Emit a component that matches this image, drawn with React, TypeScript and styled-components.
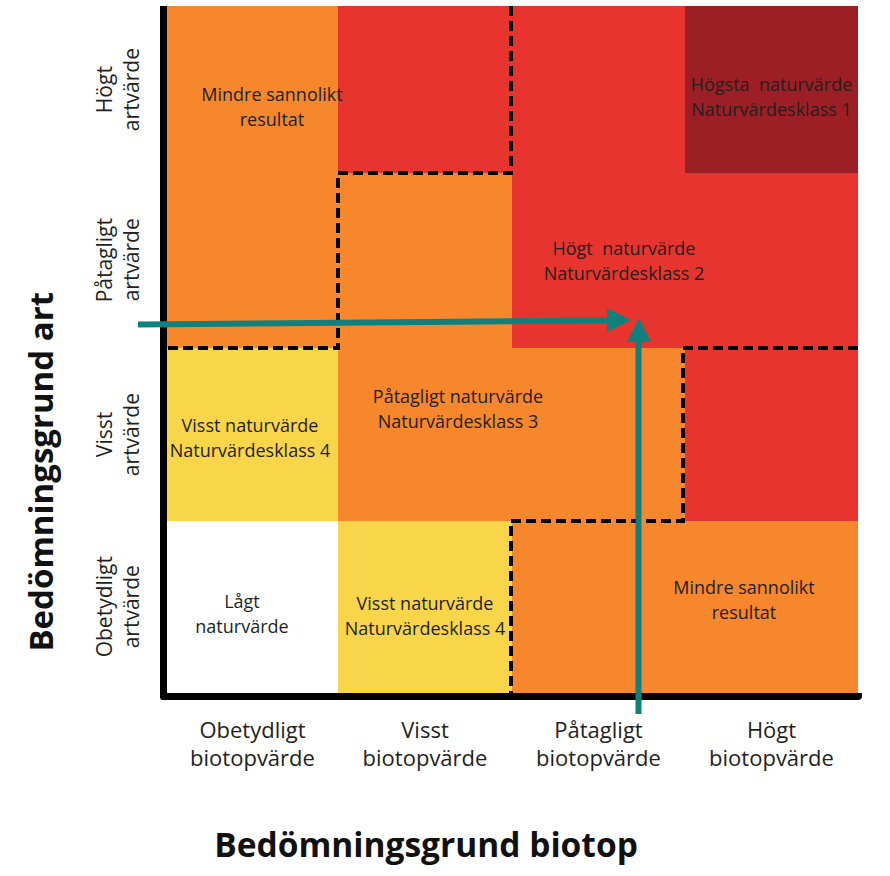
import React from "react";
import styled, { createGlobalStyle } from "styled-components";

const GlobalStyle = createGlobalStyle`
  html, body { margin: 0; padding: 0; background: #ffffff; }
  body {
    font-family: "Open Sans", "Liberation Sans", sans-serif;
    color: #231f20;
  }
`;

type Tone = "orange" | "red" | "dark" | "yellow" | "white";

const toneColor: Record<Tone, string> = {
  orange: "#f6872d",
  red: "#e8342e",
  dark: "#9c1f25",
  yellow: "#f9d54a",
  white: "#ffffff",
};

const COLS = "171px 174px 173px 173px";
const ROWS = "167px 175px 173px 172px";

const Page = styled.div`
  position: relative;
  width: 890px;
  height: 876px;
  display: grid;
  grid-template-columns: 80px 80px 702px 28px;
  grid-template-rows: 6px 694px 84px 92px;
  overflow: hidden;
`;

const SideTitle = styled.div`
  grid-column: 1;
  grid-row: 2;
  display: flex;
  align-items: center;
  justify-content: center;
  padding-top: 238px;
`;

const SideTitleText = styled.h2`
  margin: 0;
  writing-mode: vertical-rl;
  transform: rotate(180deg);
  font-size: 33px;
  font-weight: 700;
  line-height: 1;
  white-space: nowrap;
  color: #111;
`;

const RowLabels = styled.div`
  grid-column: 2;
  grid-row: 2;
  display: grid;
  grid-template-rows: ${ROWS};
  padding-bottom: 7px;
`;

const RowLabelCell = styled.div`
  display: flex;
  align-items: center;
  justify-content: center;
  padding-right: 5px;
`;

const RowLabelText = styled.span`
  writing-mode: vertical-rl;
  transform: rotate(180deg);
  text-align: center;
  font-size: 21px;
  line-height: 27px;
  white-space: nowrap;
`;

const Plot = styled.div`
  grid-column: 3;
  grid-row: 2;
  display: grid;
  grid-template-columns: ${COLS};
  grid-template-rows: ${ROWS};
  border-left: 7px solid #000;
  border-bottom: 7px solid #000;
  border-bottom-left-radius: 3px;
  border-bottom-right-radius: 4px;
  padding-right: 4px;
`;

const Cell = styled.div<{ $tone: Tone; $r: number; $c: number }>`
  grid-row: ${(p) => p.$r};
  grid-column: ${(p) => p.$c};
  background: ${(p) => toneColor[p.$tone]};
`;

const CellLabel = styled.div<{ $row: string; $col: string; $pad: string }>`
  grid-row: ${(p) => p.$row};
  grid-column: ${(p) => p.$col};
  display: flex;
  align-items: center;
  justify-content: center;
  padding: ${(p) => p.$pad};
  text-align: center;
  font-size: 18px;
  line-height: 25px;
  white-space: nowrap;
  z-index: 1;
`;

const XAxisLabels = styled.div`
  grid-column: 3;
  grid-row: 3;
  display: grid;
  grid-template-columns: ${COLS};
  align-items: start;
  padding-left: 7px;
  padding-top: 15px;
`;

const XAxisLabel = styled.div`
  text-align: center;
  font-size: 22px;
  line-height: 28px;
  white-space: nowrap;
`;

const BottomTitle = styled.h2`
  grid-column: 1 / -1;
  grid-row: 4;
  margin: 0;
  padding-top: 40px;
  padding-right: 38px;
  text-align: center;
  font-size: 33.5px;
  font-weight: 700;
  line-height: 40px;
  color: #111;
`;

const Overlay = styled.svg`
  position: absolute;
  left: 0;
  top: 0;
  width: 890px;
  height: 876px;
  pointer-events: none;
  z-index: 2;
`;

const cells: Tone[][] = [
  ["orange", "red", "red", "dark"],
  ["orange", "orange", "red", "red"],
  ["yellow", "orange", "orange", "red"],
  ["white", "yellow", "orange", "orange"],
];

const labels: { row: string; col: string; pad: string; lines: string[] }[] = [
  { row: "1", col: "1 / 3", pad: "34px 135px 0 0", lines: ["Mindre sannolikt", "resultat"] },
  { row: "1", col: "4", pad: "14px 0 0 0", lines: ["Högsta\u00a0 naturvärde", "Naturvärdesklass 1"] },
  { row: "2", col: "3 / 5", pad: "0 122px 0 0", lines: ["Högt\u00a0 naturvärde", "Naturvärdesklass 2"] },
  { row: "3", col: "2 / 4", pad: "0 107px 51px 0", lines: ["Påtagligt naturvärde", "Naturvärdesklass 3"] },
  { row: "3", col: "1", pad: "7px 5px 0 0", lines: ["Visst naturvärde", "Naturvärdesklass 4"] },
  { row: "4", col: "1", pad: "13px 21px 0 0", lines: ["Lågt", "naturvärde"] },
  { row: "4", col: "2", pad: "18px 0 0 0", lines: ["Visst naturvärde", "Naturvärdesklass 4"] },
  { row: "4", col: "3 / 5", pad: "0 0 14px 118px", lines: ["Mindre sannolikt", "resultat"] },
];

const rowLabels = [
  ["Högt", "artvärde"],
  ["Påtagligt", "artvärde"],
  ["Visst", "artvärde"],
  ["Obetydligt", "artvärde"],
];

const colLabels = [
  ["Obetydligt", "biotopvärde"],
  ["Visst", "biotopvärde"],
  ["Påtagligt", "biotopvärde"],
  ["Högt", "biotopvärde"],
];

const TEAL = "#10807c";

export default function App() {
  return (
    <>
      <GlobalStyle />
      <Page>
        <SideTitle>
          <SideTitleText>Bedömningsgrund art</SideTitleText>
        </SideTitle>

        <RowLabels>
          {rowLabels.map((l, i) => (
            <RowLabelCell key={i}>
              <RowLabelText>
                {l[0]}
                <br />
                {l[1]}
              </RowLabelText>
            </RowLabelCell>
          ))}
        </RowLabels>

        <Plot>
          {cells.flatMap((row, r) =>
            row.map((tone, c) => (
              <Cell key={`${r}-${c}`} $tone={tone} $r={r + 1} $c={c + 1} />
            ))
          )}
          {labels.map((l, i) => (
            <CellLabel key={i} $row={l.row} $col={l.col} $pad={l.pad}>
              <span>
                {l.lines[0]}
                <br />
                {l.lines[1]}
              </span>
            </CellLabel>
          ))}
        </Plot>

        <XAxisLabels>
          {colLabels.map((l, i) => (
            <XAxisLabel key={i}>
              {l[0]}
              <br />
              {l[1]}
            </XAxisLabel>
          ))}
        </XAxisLabels>

        <BottomTitle>Bedömningsgrund biotop</BottomTitle>

        <Overlay viewBox="0 0 890 876">
          <g fill="none" stroke="#000" strokeWidth={4} strokeDasharray="10 5">
            <path d="M511 6 V173 H338 V348 H167" />
            <path d="M858 348 H683 V521 H511 V693" />
          </g>
          <g fill={TEAL} stroke="none">
            <path d="M138 321.5 L609 317.3 L609 323.3 L138 327.5 Z" />
            <polygon points="607,308 631,320 607,332" />
            <rect x="635.5" y="338" width="6" height="376" />
            <polygon points="627,342 639,318 651,342" />
          </g>
        </Overlay>
      </Page>
    </>
  );
}
